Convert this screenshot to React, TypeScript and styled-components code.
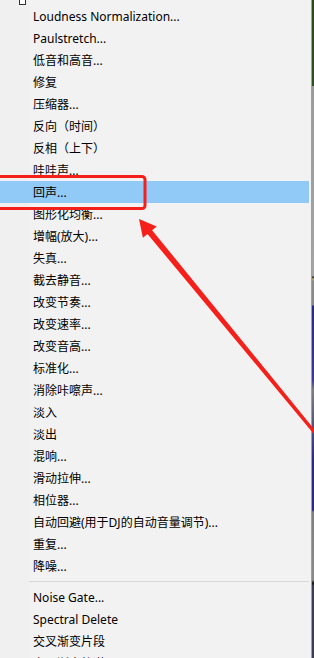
import styled, { createGlobalStyle } from 'styled-components';

const GlobalStyle = createGlobalStyle`
  html, body {
    margin: 0;
    padding: 0;
    background: #f2f2f2;
    overflow: hidden;
  }
`;

const Page = styled.div`
  position: relative;
  width: 314px;
  height: 658px;
  display: flex;
  overflow: hidden;
  font-family: 'Noto Sans', 'Noto Sans CJK SC', sans-serif;
  font-size: 12px;
  color: #000;
`;

const Menu = styled.div`
  width: 311px;
  flex: none;
  display: flex;
  flex-direction: column;
  background: linear-gradient(to right, #f0f0f0 0, #f0f0f0 29px, #f2f2f2 29px);
  border-right: 1px solid #a0a0a0;
`;

const Backdrop = styled.div`
  flex: 1;
  background: linear-gradient(
    to bottom,
    #2c4a18 0,
    #2f5020 86px,
    #9a9a9a 86px,
    #a4a4a4 276px,
    #222 277px,
    #b8b060 279px,
    #8a8a8a 281px,
    #8a8a8a 305px,
    #2a2a84 306px,
    #3a3a96 380px,
    #7e7e7e 390px,
    #2a2a80 460px,
    #2a2a84 510px,
    #7e7e7e 512px,
    #8a8a8a 580px,
    #111 583px,
    #3c3c58 586px,
    #3c3c58 658px
  );
`;

const TopStub = styled.div`
  height: 5px;
  flex: none;
  display: flex;
  align-items: flex-end;
  padding-left: 19px;
  overflow: hidden;
`;

const CheckBox = styled.div`
  width: 5px;
  height: 7px;
  border: 1px solid #333;
  background: #fff;
  flex: none;
`;

const Row = styled.div<{ $active?: boolean }>`
  height: 22px;
  flex: none;
  display: flex;
  align-items: center;
  padding-left: 33px;
  margin-right: 2px;
  white-space: nowrap;
  background: ${(p) => (p.$active ? '#91c9f7' : 'transparent')};
`;

const Separator = styled.div`
  height: 9px;
  flex: none;
  display: flex;
  align-items: center;
  padding-left: 29px;
  margin-right: 2px;

  &::after {
    content: '';
    flex: 1;
    height: 1px;
    background: #d7d7d7;
  }
`;

const Annotation = styled.svg`
  position: absolute;
  left: 0;
  top: 0;
  pointer-events: none;
`;

const itemsTop = [
  'Loudness Normalization...',
  'Paulstretch...',
  '低音和高音...',
  '修复',
  '压缩器...',
  '反向（时间）',
  '反相（上下）',
  '哇哇声...',
  '回声...',
  '图形化均衡...',
  '增幅(放大)...',
  '失真...',
  '截去静音...',
  '改变节奏...',
  '改变速率...',
  '改变音高...',
  '标准化...',
  '消除咔嚓声...',
  '淡入',
  '淡出',
  '混响...',
  '滑动拉伸...',
  '相位器...',
  '自动回避(用于DJ的自动音量调节)...',
  '重复...',
  '降噪...',
];

const itemsBottom = ['Noise Gate...', 'Spectral Delete', '交叉渐变片段', '交叉渐变轨道...'];

export default function App() {
  return (
    <>
      <GlobalStyle />
      <Page>
        <Menu>
          <TopStub>
            <CheckBox />
          </TopStub>
          {itemsTop.map((label) => (
            <Row key={label} $active={label === '回声...'}>
              {label}
            </Row>
          ))}
          <Separator />
          {itemsBottom.map((label) => (
            <Row key={label}>{label}</Row>
          ))}
        </Menu>
        <Backdrop />
        <Annotation width="314" height="658" viewBox="0 0 314 658">
          <rect
            x="-10"
            y="176.5"
            width="155"
            height="32"
            rx="3"
            fill="none"
            stroke="#f5201a"
            strokeWidth="3"
          />
          <polygon
            fill="#f5201a"
            points="139,219 156.7,226.4 152.1,230.2 331.2,450 328.8,452 147.5,234 142.9,237.8"
          />
        </Annotation>
      </Page>
    </>
  );
}
